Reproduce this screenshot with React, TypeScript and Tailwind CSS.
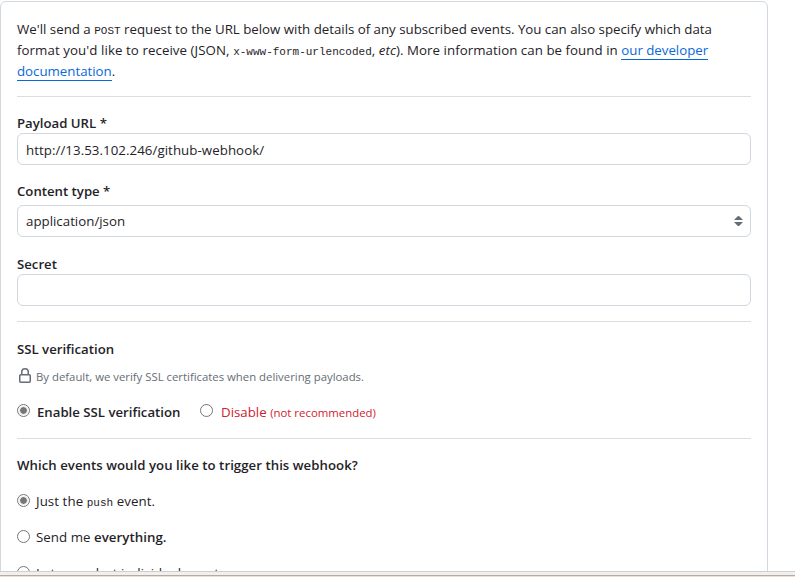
import type { ReactNode } from 'react';

function Radio({ checked = false }: { checked?: boolean }) {
  return (
    <span className="mb-[2px] flex h-[13px] w-[13px] shrink-0 items-center justify-center rounded-full border border-[#767676] bg-white">
      {checked && <span className="h-[9px] w-[9px] rounded-full border border-white bg-[#767676]" />}
    </span>
  );
}

function Divider() {
  return <div className="h-px bg-[#d8dee4]" />;
}

function Label({ children }: { children: ReactNode }) {
  return <div className="h-[21px] whitespace-nowrap text-[13.2px] leading-[21px] font-semibold">{children}</div>;
}

function Code({ children }: { children: ReactNode }) {
  return <code className="font-['Liberation_Mono',monospace] text-[11px] leading-none tracking-normal">{children}</code>;
}

function Link({ children }: { children: ReactNode }) {
  return <span className="border-b border-[#0969da] leading-none tracking-[-0.02px] text-[#0969da]">{children}</span>;
}

function Field({ children }: { children?: ReactNode }) {
  return (
    <div className="flex h-8 items-center justify-between rounded-md border border-[#d0d7de] bg-white pr-[7px] pl-2 text-[13.3px]">
      {children}
    </div>
  );
}

export default function App() {
  return (
    <div className="h-[577px] w-[795px] overflow-hidden bg-white font-['Open_Sans','Noto_Sans',sans-serif] text-[13.3px] text-[#1f2328]">
      <div className="h-[571px] overflow-hidden pt-px">
        <div className="h-[620px] w-[768px] rounded-md border border-[#d0d7de] px-4 pt-[17px]">
          <div className="h-[77px] leading-[21px] whitespace-nowrap">
            <div className="h-[21px]">We'll send a <Code>POST</Code><span className="tracking-[-0.02px]"> request to the URL below with details of any subscribed events. You can also specify which data</span></div>
            <div className="h-[21px] tracking-[0.07px]">format you'd like to receive (JSON, <Code>x-www-form-urlencoded</Code>, <em>etc</em><span className="tracking-[0.04px]">). More information can be found in </span><Link>our developer</Link></div>
            <div className="h-[21px] tracking-[-0.05px]"><Link>documentation</Link>.</div>
          </div>
          <Divider />
          <div className="pt-4">
            <Label>Payload URL *</Label>
            <div className="-mt-px mb-px">
              <Field><span className="pt-[3px] tracking-[0.05px]">http://13.53.102.246/github-webhook/</span></Field>
            </div>
          </div>
          <div className="pt-[15px]">
            <Label>Content type *</Label>
            <div className="mb-px pt-[3px]">
              <Field>
                <span className="pt-px">application/json</span>
                <svg className="h-[10px] w-[9px]" viewBox="0 0 9 10" fill="#656d76">
                  <path d="M0 4 3.4.5Q4.5-.5 5.6.5L9 4ZM0 6H9L5.6 9.5Q4.5 10.5 3.4 9.5Z" />
                </svg>
              </Field>
            </div>
          </div>
          <div className="pt-4 pb-[15px]">
            <Label>Secret</Label>
            <div className="-mt-px">
              <Field />
            </div>
          </div>
          <Divider />
          <div className="pt-[17px]">
            <Label>SSL verification</Label>
            <div className="mt-1 flex h-[26px] items-center text-[11.35px] whitespace-nowrap text-[#656d76]">
              <svg className="-mt-[3px] mr-[3px] h-4 w-4" viewBox="0 0 16 16" fill="currentColor">
                <path d="M4 4a4 4 0 0 1 8 0v2h.25c.966 0 1.75.784 1.75 1.75v5.5A1.75 1.75 0 0 1 12.25 15h-8.5A1.75 1.75 0 0 1 2 13.25v-5.5C2 6.784 2.784 6 3.75 6H4Zm8.25 3.5h-8.5a.25.25 0 0 0-.25.25v5.5c0 .138.112.25.25.25h8.5a.25.25 0 0 0 .25-.25v-5.5a.25.25 0 0 0-.25-.25ZM10.5 6V4a2.5 2.5 0 1 0-5 0v2Z" />
              </svg>
              <span>By default, we verify SSL certificates when delivering payloads.</span>
            </div>
            <div className="mt-[11px] mb-4 flex h-[21px] items-center whitespace-nowrap">
              <Radio checked />
              <span className="ml-[7px] w-[163px] pt-[3px] text-[13.2px] font-semibold">Enable SSL verification</span>
              <Radio />
              <span className="ml-2 pt-[3px] text-[#cf222e]">Disable <span className="text-[11.4px]">(not recommended)</span></span>
            </div>
          </div>
          <Divider />
          <div className="pt-4 whitespace-nowrap">
            <Label><span className="tracking-[0.05px]">Which events would you like to trigger this webhook?</span></Label>
            <div className="mt-[15px] flex h-[21px] items-center gap-[6px]"><Radio checked /><span className="tracking-[0.07px]">Just the <Code>push</Code> event.</span></div>
            <div className="mt-[15px] flex h-[21px] items-center gap-[6px]"><Radio /><span className="tracking-[0.03px]">Send me <b className="font-semibold">everything.</b></span></div>
            <div className="mt-[15px] flex h-[21px] items-center gap-[6px]"><Radio /><span>Let me select individual events.</span></div>
          </div>
        </div>
      </div>
      <div className="h-px bg-[#cfcfcf]" />
      <div className="h-[3px] bg-[#f0f0f0]" />
      <div className="h-px bg-[#b9aaa0]" />
      <div className="h-px bg-[#f3dfc8]" />
    </div>
  );
}
